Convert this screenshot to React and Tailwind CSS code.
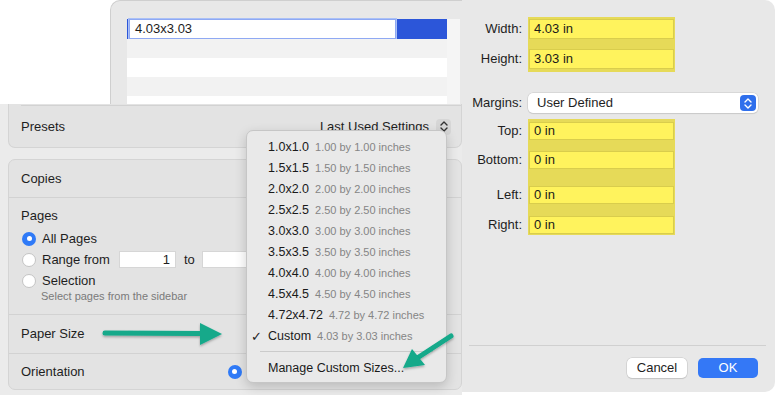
import React from "react";

const F = "font-['Liberation_Sans',Arial,sans-serif]";

function Stepper({ blue }) {
  return (
    <svg width="8" height="11" viewBox="0 0 8 11" fill="none">
      <path d="M1 4 L4 1 L7 4" stroke={blue ? "#fff" : "#333"} strokeWidth="1.4" strokeLinecap="round" strokeLinejoin="round" />
      <path d="M1 7 L4 10 L7 7" stroke={blue ? "#fff" : "#333"} strokeWidth="1.4" strokeLinecap="round" strokeLinejoin="round" />
    </svg>
  );
}

function Radio({ on }) {
  return on ? (
    <div className="w-[14px] h-[14px] rounded-full bg-[#2f7af7] flex items-center justify-center shrink-0">
      <div className="w-[5px] h-[5px] rounded-full bg-white" />
    </div>
  ) : (
    <div className="w-[14px] h-[14px] rounded-full bg-white border border-[#c4c4c4] shrink-0" />
  );
}

const menuItems = [
  ["1.0x1.0", "1.00 by 1.00 inches"],
  ["1.5x1.5", "1.50 by 1.50 inches"],
  ["2.0x2.0", "2.00 by 2.00 inches"],
  ["2.5x2.5", "2.50 by 2.50 inches"],
  ["3.0x3.0", "3.00 by 3.00 inches"],
  ["3.5x3.5", "3.50 by 3.50 inches"],
  ["4.0x4.0", "4.00 by 4.00 inches"],
  ["4.5x4.5", "4.50 by 4.50 inches"],
  ["4.72x4.72", "4.72 by 4.72 inches"],
  ["Custom", "4.03 by 3.03 inches", true],
];

function YField({ children, h = "h-[18px]" }) {
  return (
    <div className={`${h} bg-[#fff35d] border border-[#d9cd4c] flex items-center pl-[4px] text-[13px] text-[#1a1a1a]`}>
      {children}
    </div>
  );
}

export default function App() {
  return (
    <div className={`${F} relative w-[775px] h-[395px] bg-white overflow-hidden flex text-[#1e1e1e]`}>
      {/* Left column */}
      <div className="w-[462px] h-[395px] flex flex-col bg-[#ebebeb]">
        {/* top strip: white + custom sizes list */}
        <div className="h-[104px] flex bg-white">
          <div className="w-[110px]" />
          <div className="flex-1 bg-[#e8e8e8] rounded-tl-[10px] border-t border-l border-[#cfcfcf] pl-[16px] pt-[18px] flex">
            <div className="w-[320px] flex flex-col">
              <div className="h-[20px] bg-[#2c56d9] flex">
                <div className="w-[2px] bg-[#2c56d9]" />
                <div className="w-[267px] h-[20px] bg-white border border-[#8fa9f3] shadow-[0_0_0_1px_#aac0f7] flex items-center pl-[5px] text-[13px] text-[#1c1c1c]">
                  4.03x3.03
                </div>
              </div>
              <div className="h-[19px] bg-[#f2f2f2]" />
              <div className="h-[19px] bg-white" />
              <div className="h-[19px] bg-[#f2f2f2]" />
              <div className="flex-1 bg-white" />
            </div>
            <div className="w-[13px] bg-[#f5f5f5]" />
          </div>
        </div>

        {/* Presets panel (top hidden) */}
        <div className="ml-[8px] h-[44px] bg-[#e3e3e3] border-l border-r border-b border-[#d4d4d4] rounded-b-[7px] flex flex-col">
          <div className="ml-[12px] h-px bg-[#d2d2d2] mt-px" />
          <div className="flex-1 flex items-center pl-[12px] pr-[10px] text-[13px]">
            <span>Presets</span>
            <span className="ml-auto">Last Used Settings</span>
            <div className="ml-[7px] w-[15px] h-[16px] rounded-[4px] bg-[#d6d6d6] flex items-center justify-center">
              <Stepper />
            </div>
          </div>
        </div>

        {/* Main panel */}
        <div className="ml-[8px] mt-[11px] h-[231px] bg-[#e3e3e3] border border-[#d4d4d4] rounded-[7px] flex flex-col text-[13px]">
          <div className="h-[38px] flex items-center pl-[12px] border-b border-[#d2d2d2] ml-0">
            Copies
          </div>
          <div className="h-[117px] flex flex-col pl-[12px] border-b border-[#d2d2d2]">
            <div className="h-[16px] mt-[10px] leading-[16px]">Pages</div>
            <div className="h-[21px] mt-[4px] flex items-center gap-[6px] pl-[1px]">
              <Radio on />
              <span>All Pages</span>
            </div>
            <div className="h-[21px] flex items-center pl-[1px]">
              <Radio />
              <span className="ml-[6px]">Range from</span>
              <div className="ml-[9px] w-[57px] h-[17px] bg-white border border-[#d6d6d6] flex items-center justify-end pr-[5px]">1</div>
              <span className="ml-[8px]">to</span>
              <div className="ml-[7px] w-[60px] h-[17px] bg-white border border-[#d6d6d6]" />
            </div>
            <div className="h-[21px] flex items-center gap-[6px] pl-[1px]">
              <Radio />
              <span>Selection</span>
            </div>
            <div className="pl-[20px] text-[11px] text-[#7a7a7a] leading-[13px] -mt-[1px]">
              Select pages from the sidebar
            </div>
          </div>
          <div className="h-[39px] flex items-center pl-[12px] border-b border-[#d2d2d2]">
            Paper Size
          </div>
          <div className="flex-1 flex items-center pl-[12px]">
            <span>Orientation</span>
            <div className="ml-[143px]">
              <Radio on />
            </div>
          </div>
        </div>
      </div>

      {/* Right column */}
      <div className="w-[313px] h-[392px] bg-[#e8e8e8] rounded-tr-[10px] rounded-br-[10px] flex flex-col text-[13px]">
        <div className="mt-[17px] flex gap-[6px]">
          <div className="w-[60px] flex flex-col items-end pt-[2px] gap-[10px]">
            <div className="h-[20px] leading-[20px]">Width:</div>
            <div className="h-[20px] leading-[20px]">Height:</div>
          </div>
          <div className="w-[147px] bg-[#e6da58] px-[1px] pt-[2px] pb-[3px] flex flex-col gap-[10px]">
            <YField h="h-[20px]">4.03 in</YField>
            <YField h="h-[20px]">3.03 in</YField>
          </div>
        </div>

        <div className="mt-[21px] flex items-center gap-[6px]">
          <div className="w-[60px] text-right">Margins:</div>
          <div className="w-[230px] h-[20px] bg-white rounded-[5px] shadow-[0_0_0_0.5px_#c8c8c8,0_1px_1px_rgba(0,0,0,0.12)] flex items-center pl-[9px] pr-[2px]">
            <span>User Defined</span>
            <div className="ml-auto w-[16px] h-[16px] rounded-[4px] bg-[#2f6fec] flex items-center justify-center">
              <Stepper blue />
            </div>
          </div>
        </div>

        <div className="mt-[6px] flex gap-[6px]">
          <div className="w-[60px] flex flex-col items-end pt-[3px]">
            <div className="h-[18px] leading-[18px]">Top:</div>
            <div className="h-[18px] leading-[18px] mt-[11px]">Bottom:</div>
            <div className="h-[18px] leading-[18px] mt-[17px]">Left:</div>
            <div className="h-[18px] leading-[18px] mt-[12px]">Right:</div>
          </div>
          <div className="w-[147px] bg-[#e6da58] px-[1px] pt-[3px] pb-[1px] flex flex-col">
            <YField>0 in</YField>
            <div className="mt-[11px]"><YField>0 in</YField></div>
            <div className="mt-[17px]"><YField>0 in</YField></div>
            <div className="mt-[12px]"><YField>0 in</YField></div>
          </div>
        </div>

        <div className="mt-[110px] ml-[7px] w-[297px] h-px bg-[#d0d0d0]" />
        <div className="mt-[12px] flex justify-end gap-[11px] pr-[17px]">
          <div className="w-[60px] h-[20px] rounded-[5px] bg-white shadow-[0_0_0_0.5px_#c4c4c4,0_1px_1px_rgba(0,0,0,0.15)] flex items-center justify-center">
            Cancel
          </div>
          <div className="w-[60px] h-[20px] rounded-[5px] bg-[#3478f6] text-white flex items-center justify-center">
            OK
          </div>
        </div>
      </div>

      {/* Dropdown menu */}
      <div className="absolute left-[246px] top-[130px] w-[201px] h-[253px] bg-[#e9e9e9] rounded-[7px] border border-[#c6c6c6] shadow-[0_4px_12px_rgba(0,0,0,0.18)] pt-[6px] flex flex-col">
        {menuItems.map(([a, b, chk]) => (
          <div key={a} className="h-[21px] flex items-center relative">
            {chk && <span className="absolute left-[4px] text-[13px] text-[#222]">✓</span>}
            <span className="ml-[21px] text-[12.5px] text-[#1a1a1a]">{a}</span>
            <span className="ml-[6px] text-[11px] text-[#858585]">{b}</span>
          </div>
        ))}
        <div className="mt-[4px] mx-[13px] h-px bg-[#cbcbcb]" />
        <div className="mt-[5px] h-[22px] flex items-center pl-[21px] text-[12.5px] text-[#1a1a1a]">
          Manage Custom Sizes...
        </div>
      </div>

      {/* Annotation arrows */}
      <svg className="absolute left-0 top-0 pointer-events-none" width="775" height="395">
        <defs>
          <filter id="sh" x="-20%" y="-20%" width="140%" height="140%">
            <feDropShadow dx="0" dy="1.5" stdDeviation="1.2" floodColor="#000" floodOpacity="0.3" />
          </filter>
        </defs>
        <g filter="url(#sh)" fill="#12a98a" stroke="#12a98a">
          <line x1="105" y1="333" x2="204" y2="333.5" strokeWidth="5" strokeLinecap="round" />
          <polygon points="200,323 222,334 200,345" stroke="none" />
          <line x1="451" y1="336" x2="418" y2="357.5" strokeWidth="5" strokeLinecap="round" />
          <polygon points="403,368 425,365 412,349" stroke="none" />
        </g>
      </svg>
    </div>
  );
}
